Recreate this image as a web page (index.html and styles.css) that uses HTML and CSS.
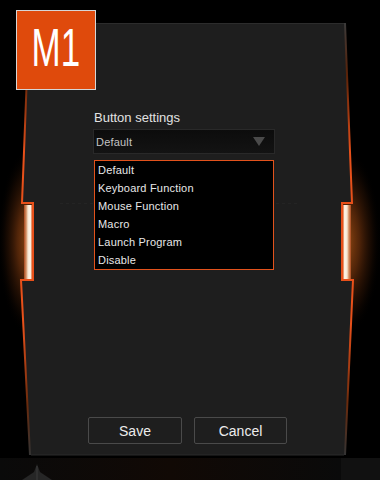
FILE: index.html
```html
<!DOCTYPE html>
<html lang="en">

<head>
    <meta charset="UTF-8">
    <meta name="viewport" content="width=device-width, initial-scale=1.0">
    <title>Button settings</title>
    <link rel="stylesheet" href="styles.css">
</head>

<body>
    <div class="stage">
        <!-- frame of the panel, drawn behind the content -->
        <svg class="frame" width="380" height="480" viewBox="0 0 380 480">
            <defs>
                <linearGradient id="edge" gradientUnits="userSpaceOnUse" x1="0" y1="23" x2="0" y2="455">
                    <stop offset="0" stop-color="#3a3a3a" />
                    <stop offset="0.12" stop-color="#5a2208" />
                    <stop offset="0.3" stop-color="#e8501a" />
                    <stop offset="0.7" stop-color="#e8501a" />
                    <stop offset="0.88" stop-color="#6a2a0c" />
                    <stop offset="1" stop-color="#333333" />
                </linearGradient>
                <radialGradient id="glowL" cx="30" cy="242" r="95" gradientUnits="userSpaceOnUse"
                    gradientTransform="translate(30 242) scale(0.34 1) translate(-30 -242)">
                    <stop offset="0" stop-color="#a05014" stop-opacity="0.95" />
                    <stop offset="0.4" stop-color="#6a300c" stop-opacity="0.75" />
                    <stop offset="0.75" stop-color="#2a1204" stop-opacity="0.45" />
                    <stop offset="1" stop-color="#000" stop-opacity="0" />
                </radialGradient>
                <radialGradient id="glowR" cx="345" cy="242" r="95" gradientUnits="userSpaceOnUse"
                    gradientTransform="translate(345 242) scale(0.38 1) translate(-345 -242)">
                    <stop offset="0" stop-color="#a05014" stop-opacity="0.95" />
                    <stop offset="0.4" stop-color="#6a300c" stop-opacity="0.75" />
                    <stop offset="0.75" stop-color="#2a1204" stop-opacity="0.45" />
                    <stop offset="1" stop-color="#000" stop-opacity="0" />
                </radialGradient>
                <linearGradient id="stripL" x1="0" y1="0" x2="1" y2="0">
                    <stop offset="0" stop-color="#a8461a" />
                    <stop offset="0.3" stop-color="#d89a70" />
                    <stop offset="0.5" stop-color="#f6e6d2" />
                    <stop offset="0.8" stop-color="#fff6ea" />
                    <stop offset="1" stop-color="#d86a38" />
                </linearGradient>
                <linearGradient id="stripR" x1="0" y1="0" x2="1" y2="0">
                    <stop offset="0" stop-color="#d86a38" />
                    <stop offset="0.2" stop-color="#fff6ea" />
                    <stop offset="0.5" stop-color="#f6e6d2" />
                    <stop offset="0.7" stop-color="#d89a70" />
                    <stop offset="1" stop-color="#a8461a" />
                </linearGradient>
                <linearGradient id="footGlow" x1="0" y1="0" x2="1" y2="0">
                    <stop offset="0" stop-color="#0a0a0a" />
                    <stop offset="0.5" stop-color="#120a05" />
                    <stop offset="1" stop-color="#0a0a0a" />
                </linearGradient>
            </defs>

            <rect x="0" y="130" width="34" height="225" fill="url(#glowL)" />
            <rect x="342" y="130" width="38" height="225" fill="url(#glowR)" />

            <polygon class="panel-shape"
                points="29,23 345,23 352,203 342,203 342,280 353,280 345,455 30,455 21,280 33,280 33,203 22,203" />
            <line x1="29" y1="23.5" x2="345" y2="23.5" stroke="#2c2c2c" />
            <line x1="31" y1="455" x2="344" y2="455" stroke="#2b2b2b" />
            <line x1="60" y1="203.5" x2="300" y2="203.5" stroke="#242424" stroke-dasharray="3 3" />

            <rect x="24" y="205" width="8" height="74" fill="url(#stripL)" />
            <rect x="343" y="205" width="8" height="74" fill="url(#stripR)" />

            <path d="M29,23 L22,203 L33,203 L33,280 L21,280 L30,455" fill="none" stroke="url(#edge)" stroke-width="2" />
            <path d="M345,23 L352,203 L342,203 L342,280 L353,280 L345,455" fill="none" stroke="url(#edge)" stroke-width="2" />
        </svg>

        <div class="badge"><span>M1</span></div>

        <div class="panel">
            <div class="field">
                <div class="field-label">Button settings</div>
                <div class="select">
                    <span class="select-value">Default</span>
                    <i class="caret"></i>
                </div>
                <ul class="options">
                    <li>Default</li>
                    <li>Keyboard Function</li>
                    <li>Mouse Function</li>
                    <li>Macro</li>
                    <li>Launch Program</li>
                    <li>Disable</li>
                </ul>
            </div>

            <div class="actions">
                <button class="btn">Save</button>
                <button class="btn btn-cancel">Cancel</button>
            </div>
        </div>

        <div class="footer">
            <div class="footer-left">
                <svg class="mouse-icon" width="34" height="18" viewBox="0 0 34 18">
                    <path d="M2,18 L14,10 L17,2 L20,10 L32,18 Z" fill="#262626" />
                    <line x1="17" y1="4" x2="17" y2="18" stroke="#3a3a3a" />
                </svg>
            </div>
            <div class="footer-right"></div>
        </div>
    </div>
</body>

</html>
```

FILE: styles.css
```css
body {
    margin: 0;
    background-color: #000;
    font-family: "Liberation Sans", Arial, sans-serif;
}

.stage {
    position: relative;
    width: 380px;
    height: 480px;
    overflow: hidden;
    display: flex;
    flex-direction: column;
}

.frame {
    position: absolute;
    top: 0;
    left: 0;
}

.panel-shape {
    fill: #1e1e1e;
}

.badge {
    position: absolute;
    top: 10px;
    left: 16px;
    width: 80px;
    height: 80px;
    box-sizing: border-box;
    border: 1px solid #d6d6d6;
    background-color: #df4a0c;
    display: flex;
    justify-content: center;
    align-items: center;
    color: #fff;
    font-size: 53px;
    z-index: 2;
}

.badge span {
    display: block;
    transform: translateY(-3px) scaleX(0.66);
}

.panel {
    position: relative;
    height: 458px;
    box-sizing: border-box;
    padding-top: 110px;
    padding-bottom: 14px;
    display: flex;
    flex-direction: column;
}

.field {
    margin-left: 93px;
    width: 182px;
}

.field-label {
    color: #e2e2e2;
    font-size: 13px;
    line-height: 16px;
    padding-left: 1px;
}

.select {
    margin-top: 3px;
    height: 25px;
    box-sizing: border-box;
    border: 1px solid #292929;
    background: linear-gradient(#0c0c0c, #131313);
    display: flex;
    align-items: center;
    padding-left: 2px;
}

.select-value {
    flex: 1;
    color: #c4c4c4;
    font-size: 11px;
    letter-spacing: 0.2px;
}

.caret {
    width: 0;
    height: 0;
    border-left: 6px solid transparent;
    border-right: 6px solid transparent;
    border-top: 9px solid #4a4a4a;
    margin-right: 9px;
}

.options {
    list-style: none;
    margin: 6px 0 0 1px;
    padding: 0 0 0 3px;
    width: 180px;
    box-sizing: border-box;
    border: 1px solid #e2521c;
    background-color: #000;
}

.options li {
    color: #e8e8e8;
    font-size: 11px;
    line-height: 18px;
    letter-spacing: 0.2px;
}

.actions {
    margin-top: auto;
    margin-left: 88px;
    display: flex;
    gap: 12px;
}

.btn {
    width: 94px;
    height: 27px;
    border: 1px solid #4a4a4a;
    border-radius: 2px;
    background-color: #1e1e1e;
    color: #ececec;
    font-family: "Liberation Sans", Arial, sans-serif;
    font-size: 14px;
    padding: 0;
}

.btn-cancel {
    width: 93px;
}

.footer {
    flex: 1;
    display: flex;
}

.footer-left {
    flex: 1;
    background: linear-gradient(90deg, #0a0a0a, #110905 50%, #0a0a0a);
    padding: 4px 0 0 20px;
}

.mouse-icon {
    display: block;
}

.footer-right {
    width: 39px;
    background-color: #111;
}
```
